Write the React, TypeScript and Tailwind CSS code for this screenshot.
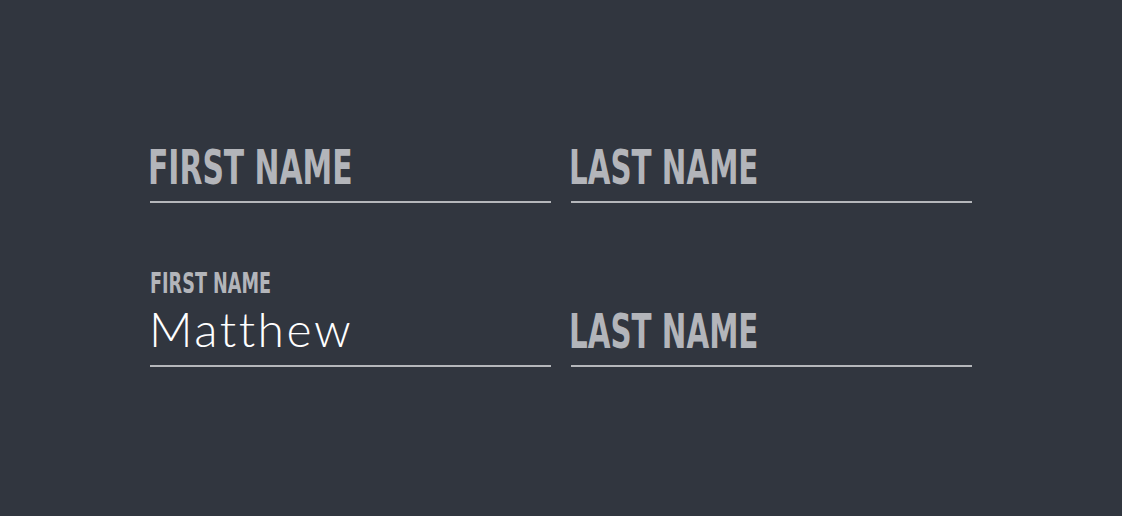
export default function App() {
  const label = "inline-block origin-left font-['DejaVu_Sans_Condensed','DejaVu_Sans',sans-serif] font-bold uppercase text-[#b3b5ba] whitespace-nowrap";
  return (
    <div className="w-[1122px] h-[516px] bg-[#31363f] pl-[150px] pt-[100px]">
      <div className="flex gap-[20px]">
        <div className="w-[401px] h-[103px] flex flex-col justify-end border-b-2 border-[#b5b7bb]">
          <div className="leading-[48px] -mb-[1px]">
            <span className={`${label} text-[48px] scale-x-[0.69] -ml-[2px]`}>First Name</span>
          </div>
        </div>
        <div className="w-[401px] h-[103px] flex flex-col justify-end border-b-2 border-[#b5b7bb]">
          <div className="leading-[48px] -mb-[1px]">
            <span className={`${label} text-[48px] scale-x-[0.68] -ml-[2px]`}>Last Name</span>
          </div>
        </div>
      </div>
      <div className="flex gap-[20px] mt-[60px]">
        <div className="w-[401px] h-[104px] flex flex-col justify-end border-b-2 border-[#b5b7bb]">
          <div className="leading-[28px] pb-[2px]">
            <span className={`${label} text-[28px] scale-x-[0.70]`}>First Name</span>
          </div>
          <div className="font-['Lato',sans-serif] font-light tracking-[2.5px] text-white text-[48px] leading-[52px] pb-[10px] -ml-[1px]">Matthew</div>
        </div>
        <div className="w-[401px] h-[104px] flex flex-col justify-end border-b-2 border-[#b5b7bb]">
          <div className="leading-[48px] -mb-[1px]">
            <span className={`${label} text-[48px] scale-x-[0.68] -ml-[2px]`}>Last Name</span>
          </div>
        </div>
      </div>
    </div>
  );
}
